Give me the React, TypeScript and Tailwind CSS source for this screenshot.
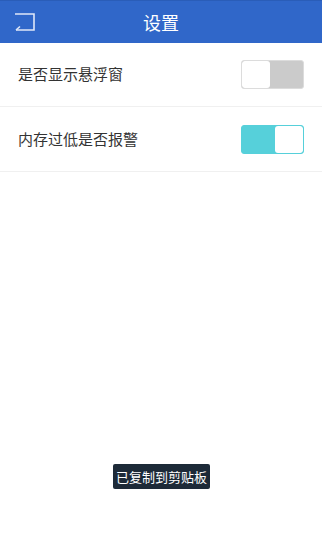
import React from "react";

function Switch({ on }: { on: boolean }) {
  if (on) {
    return (
      <div className="flex h-[29px] w-[63px] overflow-hidden rounded-[3px] border border-[#56d0da] bg-[#56d0da]">
        <div className="flex-1" />
        <div className="w-[28px] rounded-[3px] bg-white" />
      </div>
    );
  }
  return (
    <div className="flex h-[29px] w-[63px] overflow-hidden rounded-[3px] border border-[#dcdcdc] bg-[#cbcbcb]">
      <div className="w-[28px] rounded-[3px] bg-white" />
      <div className="flex-1" />
    </div>
  );
}

export default function App() {
  return (
    <div
      className="relative h-[550px] w-[322px] bg-white"
      style={{ fontFamily: '"Noto Sans CJK SC", "Noto Sans", sans-serif' }}
    >
      <div className="relative flex h-[43px] items-center justify-center border-t border-[#2a5db8] bg-[#3067c9]">
        <svg
          className="absolute left-[12px] top-[10px]"
          width="26"
          height="24"
          viewBox="0 0 26 24"
          fill="none"
          stroke="#dfe8f8"
          strokeWidth="1.6"
        >
          <path d="M3 3 H22 V19 H4" />
          <path d="M4 19 L8 15.5" />
        </svg>
        <span className="text-[18px] leading-none text-white">设置</span>
      </div>
      <div className="flex h-[64px] items-center justify-between border-b border-[#f0f0f0] pl-[18px] pr-[18px]">
        <span className="text-[15px] text-[#333333]">是否显示悬浮窗</span>
        <Switch on={false} />
      </div>
      <div className="flex h-[65px] items-center justify-between border-b border-[#f0f0f0] pl-[18px] pr-[18px]">
        <span className="text-[15px] text-[#333333]">内存过低是否报警</span>
        <Switch on={true} />
      </div>
      <div className="absolute left-[113px] top-[464px] flex h-[25px] w-[97px] items-center justify-center rounded-[2px] bg-[#1d2a38]">
        <span className="text-[13px] leading-none text-white">已复制到剪贴板</span>
      </div>
    </div>
  );
}
